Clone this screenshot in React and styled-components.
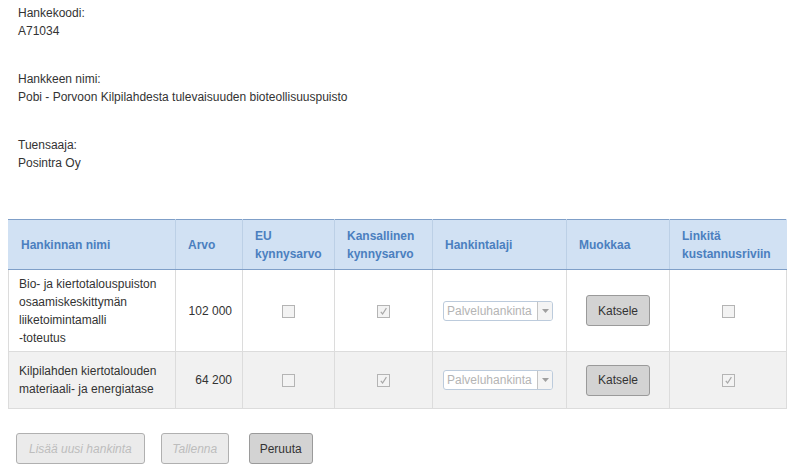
import React from "react";
import styled, { createGlobalStyle } from "styled-components";

const Global = createGlobalStyle`
  html, body { margin: 0; padding: 0; background: #fff; }
  body { font-family: "Liberation Sans", Arial, sans-serif; font-size: 12px; color: #333; }
`;

const Page = styled.div`
  padding: 4px 8px 0 8px;
  width: 778px;
`;

const Info = styled.div`
  padding-left: 10px;
  display: flex;
  flex-direction: column;
  gap: 30px;
`;

const Field = styled.div`
  line-height: 18px;
`;

const Table = styled.table`
  margin-top: 47px;
  width: 778px;
  border-collapse: collapse;
  table-layout: fixed;
`;

const Th = styled.th`
  background: #d1e1f3;
  color: #4b7fbf;
  font-weight: bold;
  text-align: left;
  vertical-align: middle;
  height: 49px;
  padding: 0 12px;
  line-height: 18px;
  border-top: 1px solid #7f9fc8;
  border-bottom: 1px solid #7f9fc8;
  border-left: 1px solid #bcd0e6;
  border-right: 1px solid #bcd0e6;
  &:first-child { border-left-color: #d1e1f3; }
  &:last-child { border-right-color: #d1e1f3; }
`;

const Tr = styled.tr`
  background: ${(p) => (p.$alt ? "#f1f1f1" : "#fff")};
`;

const Td = styled.td`
  border: 1px solid #dcdcdc;
  padding: 0 10px;
  line-height: 18px;
  vertical-align: middle;
  text-align: ${(p) => p.$align || "left"};
  color: #333;
  height: ${(p) => p.$h || "auto"};
`;

const Check = styled.span`
  display: inline-block;
  width: 11px;
  height: 11px;
  border: 1px solid #b4b4b4;
  background: #f3f3f3;
  vertical-align: middle;
  position: relative;
`;

const CheckMark = styled.svg`
  position: absolute;
  left: 1px;
  top: 1px;
`;

const Checkbox = ({ checked }) => (
  <Check>
    {checked && (
      <CheckMark width="9" height="9" viewBox="0 0 9 9">
        <path d="M1.8 4.8 L3.6 7 L7.4 1.2" fill="none" stroke="#a8a8a8" strokeWidth="1.2" />
      </CheckMark>
    )}
  </Check>
);

const Select = styled.div`
  display: inline-flex;
  align-items: stretch;
  width: 108px;
  height: 18px;
  border: 1px solid #bccbdc;
  border-radius: 3px;
  background: #fff;
  box-sizing: content-box;
  vertical-align: middle;
  overflow: hidden;
`;

const SelectText = styled.span`
  flex: 1;
  color: #b4b4b4;
  font-size: 12px;
  line-height: 18px;
  padding-left: 3px;
  white-space: nowrap;
  overflow: hidden;
`;

const SelectArrow = styled.span`
  width: 14px;
  border-left: 1px solid #c4c4c4;
  background: #f4f4f4;
  display: flex;
  align-items: center;
  justify-content: center;
`;

const Button = styled.button`
  font-family: "Liberation Sans", Arial, sans-serif;
  font-size: 12px;
  height: 31px;
  padding: 0 ${(p) => p.$px || 11}px;
  border-radius: 3px;
  border: 1px solid ${(p) => (p.disabled ? "#b0b0b0" : "#9a9a9a")};
  background: ${(p) => (p.disabled ? "#ebebeb" : "#d3d3d3")};
  color: ${(p) => (p.disabled ? "#bdbdbd" : "#333")};
  font-style: ${(p) => (p.disabled ? "italic" : "normal")};
  margin-left: ${(p) => p.$ml || 0}px;
  cursor: default;
`;

const Actions = styled.div`
  display: flex;
  margin-top: 24px;
  padding-left: 8px;
`;

const rows = [
  {
    name: ["Bio- ja kiertotalouspuiston", "osaamiskeskittymän", "liiketoimintamalli", "-toteutus"],
    value: "102 000",
    eu: false,
    nat: true,
    link: false,
    h: "81px",
  },
  {
    name: ["Kilpilahden kiertotalouden", "materiaali- ja energiatase"],
    value: "64 200",
    eu: false,
    nat: true,
    link: true,
    h: "56px",
    alt: true,
  },
];

export default function App() {
  return (
    <Page>
      <Global />
      <Info>
        <Field>
          Hankekoodi:
          <br />
          A71034
        </Field>
        <Field>
          Hankkeen nimi:
          <br />
          Pobi - Porvoon Kilpilahdesta tulevaisuuden bioteollisuuspuisto
        </Field>
        <Field>
          Tuensaaja:
          <br />
          Posintra Oy
        </Field>
      </Info>
      <Table>
        <colgroup>
          <col style={{ width: 167 }} />
          <col style={{ width: 67 }} />
          <col style={{ width: 92 }} />
          <col style={{ width: 98 }} />
          <col style={{ width: 134 }} />
          <col style={{ width: 103 }} />
          <col style={{ width: 117 }} />
        </colgroup>
        <thead>
          <tr>
            <Th>Hankinnan nimi</Th>
            <Th>Arvo</Th>
            <Th>
              EU
              <br />
              kynnysarvo
            </Th>
            <Th>
              Kansallinen
              <br />
              kynnysarvo
            </Th>
            <Th>Hankintalaji</Th>
            <Th>Muokkaa</Th>
            <Th>
              Linkitä
              <br />
              kustannusriviin
            </Th>
          </tr>
        </thead>
        <tbody>
          {rows.map((r, i) => (
            <Tr key={i} $alt={r.alt}>
              <Td $h={r.h}>
                {r.name.map((l, j) => (
                  <React.Fragment key={j}>
                    {j > 0 && <br />}
                    {l}
                  </React.Fragment>
                ))}
              </Td>
              <Td $align="right">{r.value}</Td>
              <Td $align="center">
                <Checkbox checked={r.eu} />
              </Td>
              <Td $align="center">
                <Checkbox checked={r.nat} />
              </Td>
              <Td>
                <Select>
                  <SelectText>Palveluhankinta</SelectText>
                  <SelectArrow>
                    <svg width="7" height="4" viewBox="0 0 7 4">
                      <path d="M0 0 L7 0 L3.5 4 Z" fill="#a0a0a0" />
                    </svg>
                  </SelectArrow>
                </Select>
              </Td>
              <Td $align="center">
                <Button $px={11}>Katsele</Button>
              </Td>
              <Td $align="center">
                <Checkbox checked={r.link} />
              </Td>
            </Tr>
          ))}
        </tbody>
      </Table>
      <Actions>
        <Button disabled $px={12}>Lisää uusi hankinta</Button>
        <Button disabled $px={10.5} $ml={16}>Tallenna</Button>
        <Button $px={10} $ml={20}>Peruuta</Button>
      </Actions>
    </Page>
  );
}
